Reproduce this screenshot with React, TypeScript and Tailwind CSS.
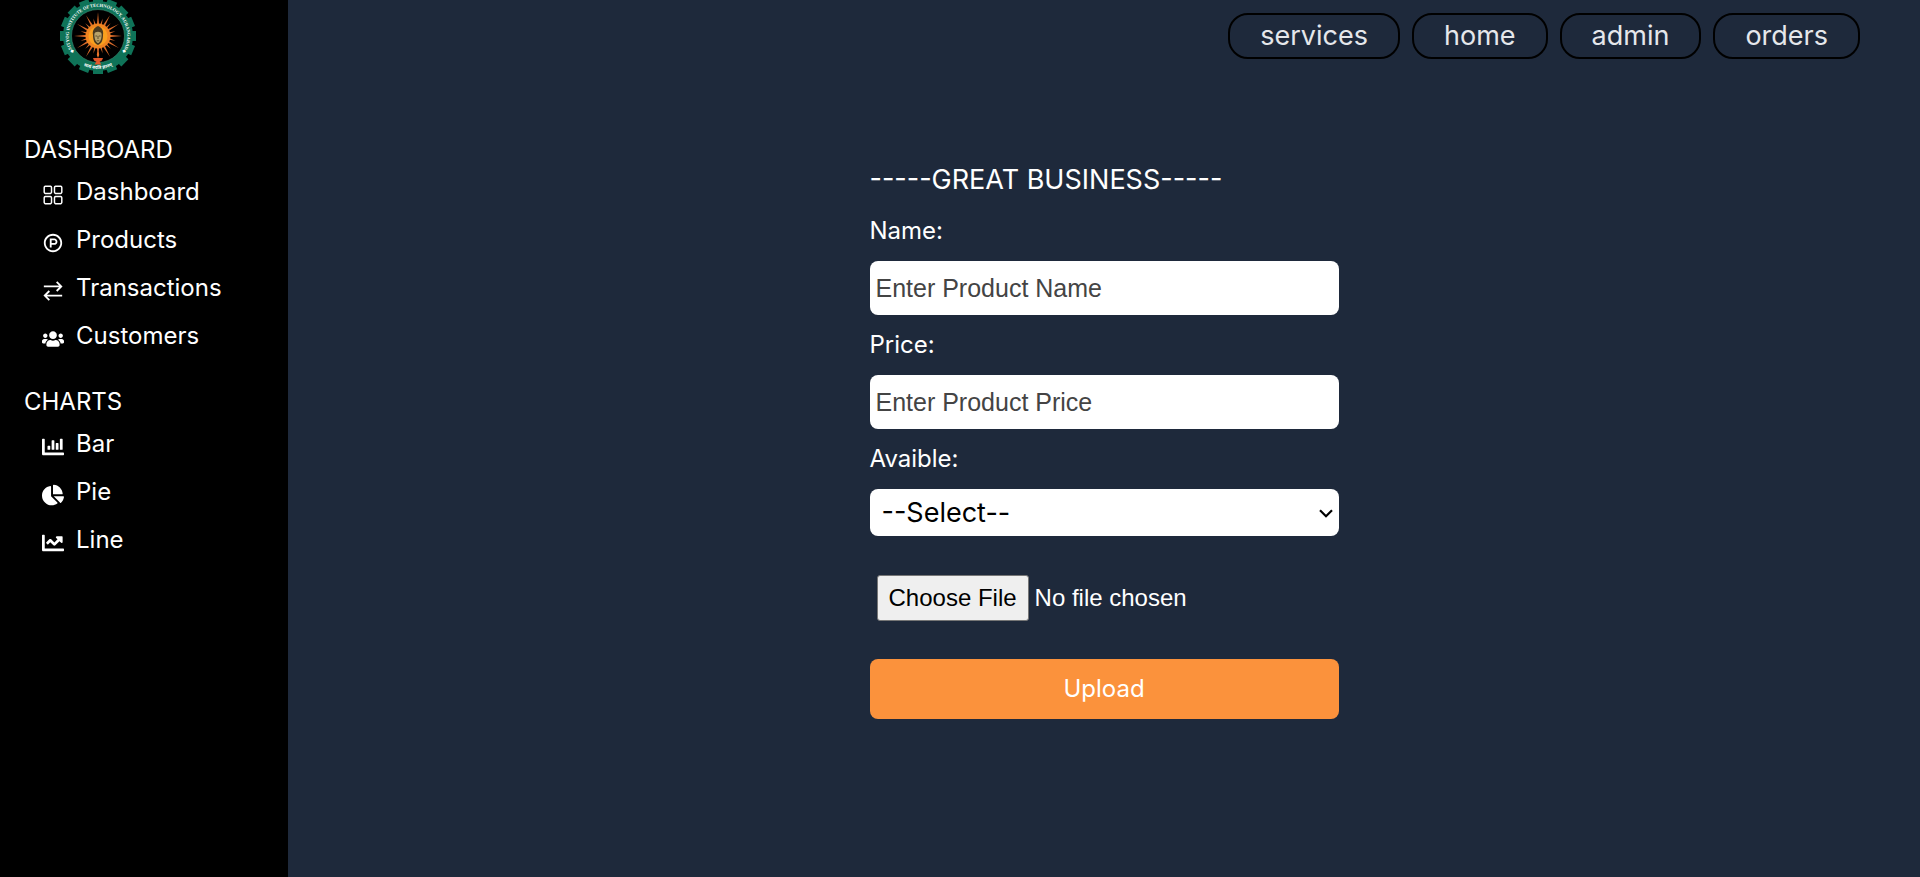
import type { IconType } from "react-icons";
import { RxDashboard } from "react-icons/rx";
import { RiProductHuntLine } from "react-icons/ri";
import { GrTransaction } from "react-icons/gr";
import { FaUsers, FaChartBar, FaChartPie, FaChartLine } from "react-icons/fa";

type Item = { label: string; Icon: IconType };

const sections: { title: string; items: Item[] }[] = [
  {
    title: "DASHBOARD",
    items: [
      { label: "Dashboard", Icon: RxDashboard },
      { label: "Products", Icon: RiProductHuntLine },
      { label: "Transactions", Icon: GrTransaction },
      { label: "Customers", Icon: FaUsers },
    ],
  },
  {
    title: "CHARTS",
    items: [
      { label: "Bar", Icon: FaChartBar },
      { label: "Pie", Icon: FaChartPie },
      { label: "Line", Icon: FaChartLine },
    ],
  },
];

const links = ["services", "home", "admin", "orders"];

function Logo() {
  const teeth = Array.from({ length: 16 }, (_, i) => i * 22.5);
  const rays = Array.from({ length: 24 }, (_, i) => i * 15);
  return (
    <svg viewBox="-80 -80 160 160" className="size-20" role="img" aria-label="Sityog Institute of Technology">
      <g transform="scale(2)">
        {teeth.map((a) => (
          <rect key={a} x="-5" y="-38" width="10" height="8" fill="#0f7358" transform={`rotate(${a})`} />
        ))}
        <circle r="30.5" fill="none" stroke="#0f7358" strokeWidth="9" />
        <circle r="26.5" fill="#000" stroke="#3f8f76" strokeWidth="0.6" />
        {rays.map((a, i) => (
          <path key={a} d={i % 2 ? "M-1 -10L0 -18L1 -10Z" : "M-1.2 -10L0 -24L1.2 -10Z"} fill="#d96a2a" transform={`rotate(${a})`} />
        ))}
        <circle r="12.5" fill="#f08420" />
        <circle r="9.5" fill="#f9a01f" />
        <path d="M-5 -1C-6 -6 -3 -9 0 -10C3 -9 6 -6 5 -1C5 5 3 8 0 9C-3 8 -5 5 -5 -1Z" fill="#4a3a20" />
        <path d="M-3.6 -2C-3.4 -5 3.4 -5 3.6 -2C3.8 3 2 6.5 0 7C-2 6.5 -3.8 3 -3.6 -2Z" fill="#b9a36a" />
        <path d="M-2.6 0H-.8M.8 0H2.6M0 0V3M-1.3 4.8H1.3" stroke="#4a3a20" strokeWidth="0.8" />
        <path d="M0 15C1.6 18 1.6 20 0 21C-1.6 20 -1.6 18 0 15Z" fill="#e8742a" />
        <path d="M-5 22H5C4.4 24.4 3 25.4 1.6 25.8L3.4 28.4H-3.4L-1.6 25.8C-3 25.4 -4.4 24.4 -5 22Z" fill="#e2572b" />
      </g>
      <path id="ring-top" d="M-36 46.2A58.6 58.6 0 1 1 36 46.2" fill="none" />
      <path id="ring-bottom" d="M-32 57.6A66 66 0 0 0 32 57.6" fill="none" />
      <text className="font-['Liberation_Serif',serif] text-[9px] font-bold" fill="#fff">
        <textPath href="#ring-top" startOffset="50%" textAnchor="middle">◆SITYOG INSTITUTE OF TECHNOLOGY, AURANGABAD◆</textPath>
      </text>
      <text className="font-['Noto_Sans',sans-serif] text-[9px] font-bold" fill="#fff">
        <textPath href="#ring-bottom" startOffset="50%" textAnchor="middle">सत्यं वदति ज्ञानम्</textPath>
      </text>
    </svg>
  );
}

const textInput =
  "h-[54px] rounded-lg bg-white px-[6px] font-['Liberation_Sans',sans-serif] text-[25px] text-[#111] placeholder:text-[#444]";

export default function App() {
  return (
    <div className="flex min-h-screen bg-[#1e293b] font-['Inter',sans-serif] text-2xl text-white">
      <aside className="w-72 shrink-0 bg-black px-6">
        <div className="-mt-1 flex pl-[34px]">
          <Logo />
        </div>
        <div className="mt-14 flex flex-col gap-6">
          {sections.map(({ title, items }) => (
            <section key={title}>
              <h2 className="leading-9">{title}</h2>
              <ul>
                {items.map(({ label, Icon }) => (
                  <li key={label}>
                    <a href="#" className="flex h-12 items-center gap-3 pl-[18px]">
                      <Icon className="mt-[6px] size-[22px]" />
                      <span>{label}</span>
                    </a>
                  </li>
                ))}
              </ul>
            </section>
          ))}
        </div>
      </aside>

      <div className="flex flex-1 flex-col">
        <nav className="flex justify-end gap-3 pt-[13px] pr-[60px] text-[27px] text-gray-200">
          {links.map((label) => (
            <a key={label} href="#" className="rounded-[20px] border-2 border-black px-[30px] leading-[42px]">
              {label}
            </a>
          ))}
        </nav>

        <main className="mx-auto mt-[100px] w-[469px]">
          <h1 className="text-[27px] leading-[42px]">-----GREAT BUSINESS-----</h1>
          <form className="flex flex-col" onSubmit={(e) => e.preventDefault()}>
            <label htmlFor="name" className="py-3 leading-9">Name:</label>
            <input id="name" placeholder="Enter Product Name" className={textInput} />
            <label htmlFor="price" className="py-3 leading-9">Price:</label>
            <input id="price" placeholder="Enter Product Price" className={textInput} />
            <label htmlFor="available" className="py-3 leading-9">Avaible:</label>
            <div className="relative flex">
              <select id="available" className="h-[47px] w-full appearance-none rounded-lg bg-white px-3 text-[27px] text-black">
                <option>--Select--</option>
              </select>
              <svg viewBox="0 0 14 9" className="pointer-events-none absolute top-5 right-[6px] h-[9px] w-[14px]" fill="none" stroke="#000" strokeWidth="2.2">
                <path d="M1 1.2L7 7.2L13 1.2" />
              </svg>
            </div>
            <input
              type="file"
              aria-label="Product image"
              className="mt-[39px] mb-[38px] ml-[7px] font-['Liberation_Sans',sans-serif] file:mr-[6px] file:rounded-[3px] file:border file:border-solid file:border-[#767676] file:bg-[#efefef] file:px-[11px] file:py-[6px] file:text-black"
            />
            <button type="submit" className="h-[60px] rounded-lg bg-[#fb923c]">Upload</button>
          </form>
        </main>
      </div>
    </div>
  );
}
